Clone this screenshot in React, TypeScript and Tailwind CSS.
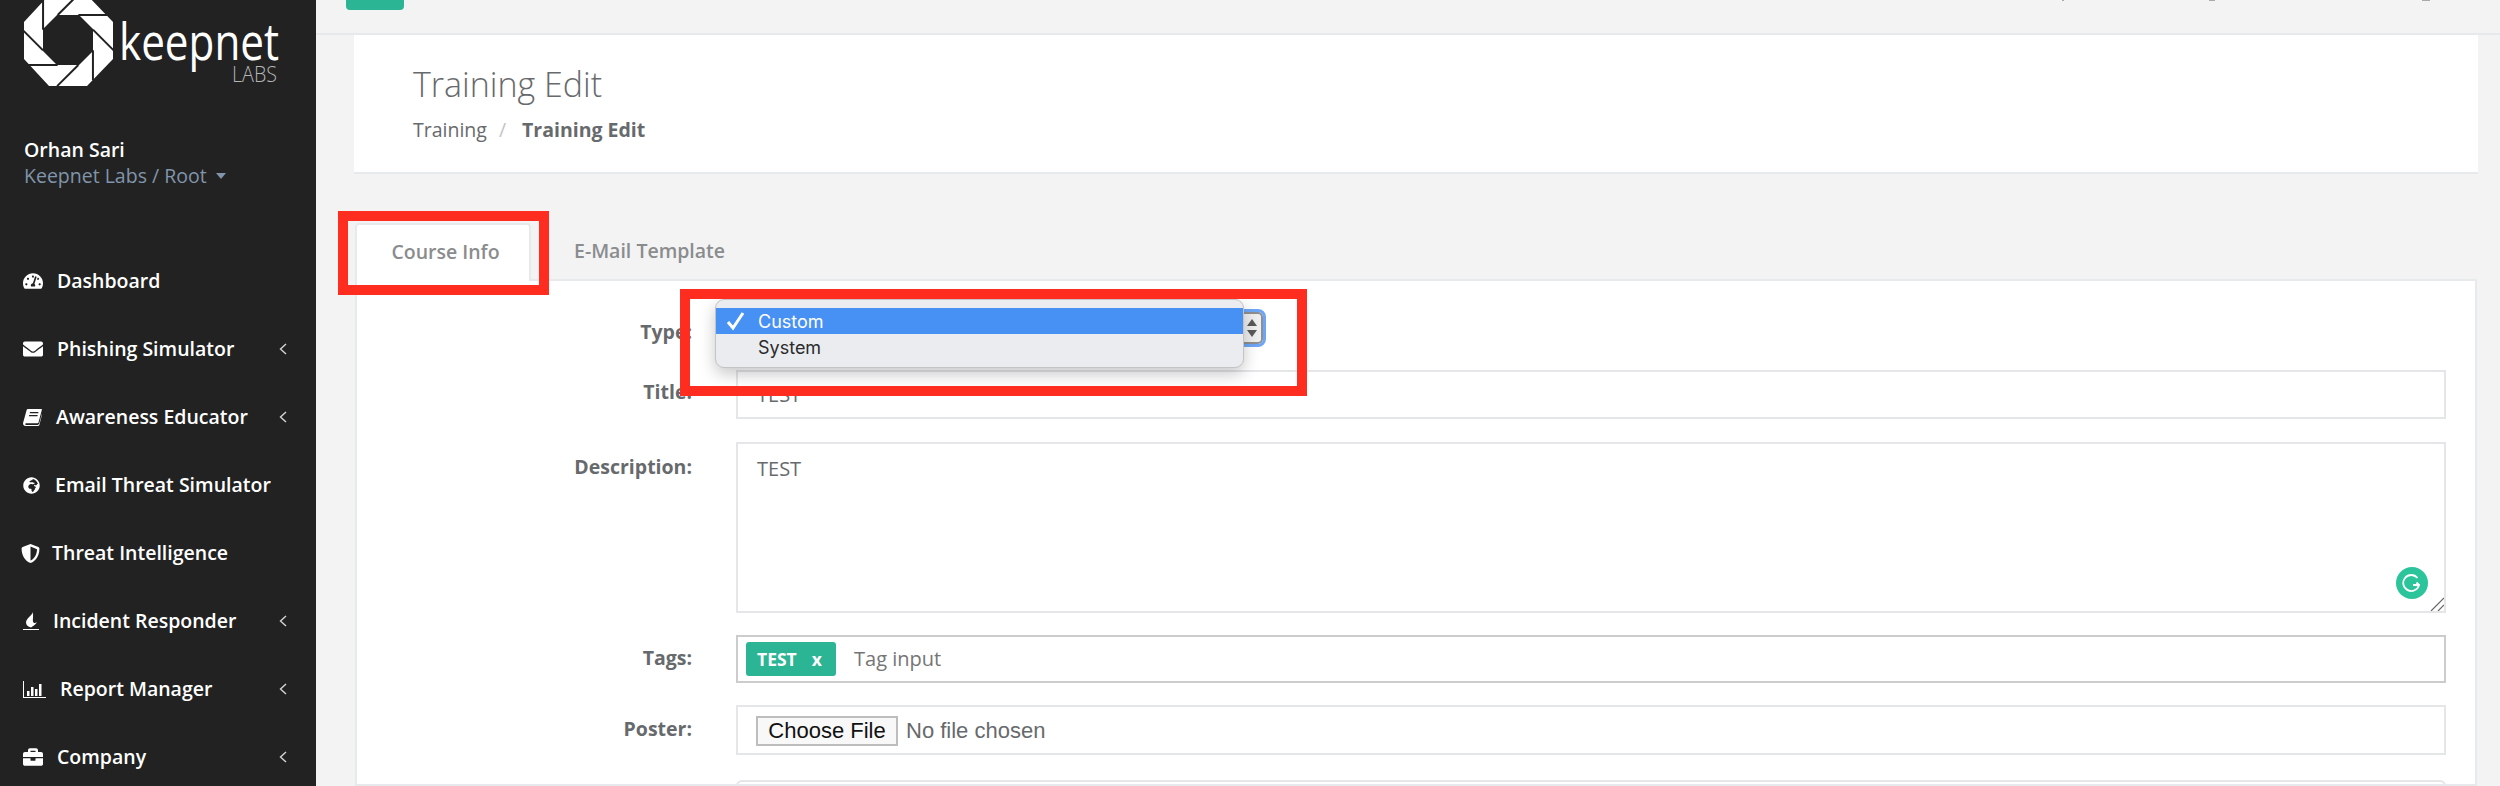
import { FaBriefcase, FaEnvelope, FaGlobeAfrica, FaShieldAlt, FaTachometerAlt } from 'react-icons/fa';
import { ReactNode } from 'react';

// pinwheel cuts of the logo: each inner edge runs on until it leaves the ring
const logoCuts = [0, 1, 2, 3, 4, 5, 6, 7].map((i) => {
	const at = (n: number, r: number) => {
		const a = ((n * 45 + 22.5) * Math.PI) / 180;
		return [68 + r * Math.cos(a), 40 + r * Math.sin(a)];
	};
	const [x1, y1] = at(i, 27);
	const [x2, y2] = at(i + 1, 27);
	const len = Math.hypot(x2 - x1, y2 - y1);
	const ex = x2 + ((x2 - x1) / len) * 30;
	const ey = y2 + ((y2 - y1) / len) * 30;
	return `M${x2} ${y2} L${ex} ${ey}`;
});

const Logo = () => (
	<svg viewBox="0 0 290 90" className="w-[290px] h-[90px] block">
		<path
			d="M49 -5 L87 -5 L113 22 L113 59 L87 86 L49 86 L24 59 L24 22 Z M57 15 L43 29 L43 51 L57 65 L79 65 L93 51 L93 29 L79 15 Z"
			fill="white"
			fillRule="evenodd"
		/>
		<path d={logoCuts.join(' ')} stroke="#222222" strokeWidth="2" fill="none" />
		<text x="119" y="60" fill="white" fontSize="52" fontWeight="400" fontFamily="'Open Sans', sans-serif" textLength="160" lengthAdjust="spacingAndGlyphs">
			keepnet
		</text>
		<text x="232" y="82" fill="#b5b5b5" fontSize="22" fontWeight="300" fontFamily="'Open Sans', sans-serif" textLength="45" lengthAdjust="spacingAndGlyphs">
			LABS
		</text>
	</svg>
);

const BookIcon = () => (
	<svg viewBox="0 0 19 17" className="w-[19px] h-[17px]" fill="white">
		<path d="M5 0 H18.5 C19 0 19 .5 18.8 1 L15.5 13.5 C15.3 14 15 14.3 14.5 14.3 H3 C2 14.3 2 16 3 16 H14.5 C15.5 16 16 15 16.3 14.3 L18.8 5 L19 5.5 L16.5 15.5 C16.2 16.5 15.5 17 14.5 17 H2.5 C.8 17 -.4 15.5 .2 13.5 L3.5 1.5 C3.8 .5 4.2 0 5 0Z" />
		<path d="M7 3 H15.5 L15.2 4.2 H6.7Z M6.2 6 H14.7 L14.4 7.2 H5.9Z" fill="#222222" />
	</svg>
);

const FireIcon = () => (
	<svg viewBox="0 0 16 18" className="w-[16px] h-[18px]" fill="white">
		<path d="M9.5 0 C10 3 3 6 3 10.5 C3 13 5 15 8 15.5 C9 14.8 12 13.5 14 10 C13 11 11.5 11.5 10.5 10.5 C9 9 11 4 9.5 0Z" />
		<rect x="0" y="17" width="16" height="1" />
	</svg>
);

const ChartIcon = () => (
	<svg viewBox="0 0 23 17" className="w-[23px] h-[17px]" fill="white">
		<rect x="0" y="0" width="1" height="17" />
		<rect x="0" y="16" width="23" height="1" />
		<rect x="4" y="10" width="2.5" height="5" />
		<rect x="8" y="6" width="2.5" height="9" />
		<rect x="12" y="8" width="2.5" height="7" />
		<rect x="16" y="3" width="2.5" height="12" />
	</svg>
);

const menu: { icon: ReactNode; label: string; slot: string; arrow?: boolean }[] = [
	{ icon: <FaTachometerAlt className="w-[20px] h-[20px]" />, label: 'Dashboard', slot: 'w-[34px]' },
	{ icon: <FaEnvelope className="w-[20px] h-[20px]" />, label: 'Phishing Simulator', slot: 'w-[34px]', arrow: true },
	{ icon: <BookIcon />, label: 'Awareness Educator', slot: 'w-[33px]', arrow: true },
	{ icon: <FaGlobeAfrica className="w-[17px] h-[17px]" />, label: 'Email Threat Simulator', slot: 'w-[32px]' },
	{ icon: <FaShieldAlt className="w-[19px] h-[19px] -ml-[2px]" />, label: 'Threat Intelligence', slot: 'w-[29px]' },
	{ icon: <FireIcon />, label: 'Incident Responder', slot: 'w-[30px]', arrow: true },
	{ icon: <ChartIcon />, label: 'Report Manager', slot: 'w-[37px]', arrow: true },
	{ icon: <FaBriefcase className="w-[20px] h-[20px]" />, label: 'Company', slot: 'w-[34px]', arrow: true },
];

const Sidebar = () => (
	<aside className="w-[316px] h-full shrink-0 bg-[#222222] overflow-hidden">
		<Logo />
		<div className="pl-[24px] mt-[47px]">
			<div className="text-[19.5px] leading-[26px] font-semibold text-white">Orhan Sari</div>
			<div className="text-[19.5px] leading-[26px] text-[#8095ab] flex items-center">
				Keepnet Labs / Root
				<span className="ml-[9px] w-0 h-0 border-x-[5px] border-x-transparent border-t-[6px] border-t-[#8095ab]" />
			</div>
		</div>
		<nav className="mt-[58px]">
			{menu.map((m) => (
				<div key={m.label} className="h-[68px] pl-[23px] pr-[29px] flex items-center text-white text-[19.5px] font-semibold">
					<span className={`${m.slot} shrink-0 flex items-center`}>{m.icon}</span>
					<span>{m.label}</span>
					{m.arrow && (
						<svg viewBox="0 0 8 12" className="w-[8px] h-[12px] ml-auto" fill="none" stroke="#d5d5d5" strokeWidth="1.4">
							<path d="M7 1 L1.5 6 L7 11" />
						</svg>
					)}
				</div>
			))}
		</nav>
	</aside>
);

const Row = ({ label, className, pad, children }: { label: string; className: string; pad: string; children: ReactNode }) => (
	<div className={`flex ${className}`}>
		<label className={`w-[379px] shrink-0 pr-[44px] text-right text-[19.5px] leading-[26px] font-bold text-[#676a6c] ${pad}`}>{label}</label>
		<div className="w-[1710px] h-full relative">{children}</div>
	</div>
);

const inputBox = 'w-full h-full border-2 border-[#e5e6e7] text-[20px] text-[#676a6c] px-[19px]';

const Form = () => (
	<div className="flex-1 border-2 border-[#e7eaec] bg-white pt-[23px] min-h-0 overflow-hidden">
		<Row label="Type:" className="h-[45px]" pad="pt-[15px]">
			<div className="w-[527px] h-[32px] mt-[8px] bg-[#efefef] rounded-[5px] border-2 border-[#8f8f8f] outline-[3px] outline-[#6ea6f5] flex items-center justify-end pr-[3px]">
				<svg viewBox="0 0 12 20" className="w-[12px] h-[20px]" fill="#5a5a5a">
					<path d="M6 1 L11 8 L1 8 Z M6 19 L11 12 L1 12 Z" />
				</svg>
			</div>
		</Row>
		<Row label="Title:" className="h-[49px] mt-[21px]" pad="pt-[9px]">
			<div className={`${inputBox} flex items-center`}>TEST</div>
		</Row>
		<Row label="Description:" className="h-[171px] mt-[23px]" pad="pt-[12px]">
			<div className={`${inputBox} pt-[10px]`}>TEST</div>
			<div className="absolute right-[18px] bottom-[14px] w-[32px] h-[32px] rounded-full bg-[#2bc49b] flex items-center justify-center">
				<svg viewBox="0 0 20 20" className="w-[20px] h-[20px]" fill="none" stroke="white" strokeWidth="1.8">
					<path d="M15.5 5 A8 8 0 1 0 17 12 H11 M17 12 L14.5 9.5" />
				</svg>
			</div>
			<svg viewBox="0 0 14 14" className="absolute right-[2px] bottom-[2px] w-[14px] h-[14px]" stroke="#666" strokeWidth="1.2">
				<path d="M1 14 L14 1 M8 14 L14 8" />
			</svg>
		</Row>
		<Row label="Tags:" className="h-[48px] mt-[22px]" pad="pt-[10px]">
			<div className="w-full h-full border-2 border-[#cccccc] flex items-center pl-[8px] text-[20px]">
				<span className="h-[34px] w-[90px] bg-[#2bb594] rounded-[3px] text-white font-bold text-[17.5px] pl-[11px] flex items-center">
					TEST<span className="ml-[15px]">x</span>
				</span>
				<span className="ml-[18px] text-[#757575]">Tag input</span>
			</div>
		</Row>
		<Row label="Poster:" className="h-[50px] mt-[22px]" pad="pt-[11px]">
			<div className="w-full h-full border-2 border-[#e5e6e7] flex items-center pl-[18px] pt-[1px] text-[22px] text-[#676a6c] font-['Liberation_Sans',sans-serif]">
				<span className="h-[30px] w-[142px] border-2 border-[#bdbdbd] bg-[#f8f8f8] flex items-center justify-center text-[#111]">
					Choose File
				</span>
				<span className="ml-[8px]">No file chosen</span>
			</div>
		</Row>
		<div className="ml-[379px] w-[1710px] mt-[25px] h-[40px] border-2 border-[#e5e6e7] rounded-[6px]" />
	</div>
);

export default function App() {
	return (
		<div className="relative flex w-[2500px] h-[786px] overflow-hidden bg-[#f3f3f4] text-[#676a6c] font-['Open_Sans',sans-serif]">
			<Sidebar />
			<main className="flex-1 min-w-0 flex flex-col">
				<div className="h-[35px] shrink-0 border-b-2 border-[#e7eaec] pl-[30px] flex justify-between">
					<div className="w-[58px] h-[10px] bg-[#2bb594] rounded-b-[4px]" />
					<div className="flex items-start pr-[70px]">
						<span className="w-[2px] h-[1px] bg-[#aaaaaa]" />
						<span className="w-[6px] h-[1px] bg-[#aaaaaa] ml-[145px]" />
						<span className="w-[8px] h-[1px] bg-[#aaaaaa] ml-[207px]" />
					</div>
				</div>
				<div className="ml-[38px] mr-[22px] h-[139px] shrink-0 bg-white border-b-2 border-[#e7eaec] pl-[59px] pt-[27px]">
					<h2 className="text-[34px] leading-[44px] font-light text-[#676a6c]">Training Edit</h2>
					<div className="mt-[11px] text-[19.5px] leading-[26px] flex">
						<span>Training</span>
						<span className="ml-[12px] text-[#c4c4c4]">/</span>
						<strong className="ml-[16px] font-bold">Training Edit</strong>
					</div>
				</div>
				<div className="ml-[39px] mr-[23px] mt-[49px] flex-1 min-h-0 flex flex-col">
					<div className="flex h-[58px] shrink-0 -mb-[2px] z-10">
						<div className="w-[176px] bg-white border-2 border-b-0 border-[#e7eaec] rounded-t-[4px] flex items-center justify-center text-[19.5px] font-semibold text-[#8a8c8e] pb-[2px] pl-[5px]">
							Course Info
						</div>
						<div className="ml-[14px] px-[29px] flex items-center text-[19.5px] font-semibold text-[#8a8c8e] pb-[2px]">
							E-Mail Template
						</div>
					</div>
					<Form />
				</div>
			</main>
			<div className="absolute left-[338px] top-[211px] w-[211px] h-[84px] border-[10px] border-[#ff2d20]" />
			<div className="absolute left-[715px] top-[299px] w-[529px] h-[69px] bg-[#eaecf0] rounded-[9px] border border-[#c4c4c4] shadow-[0_6px_16px_rgba(0,0,0,0.22)] pt-[8px] text-[18px] font-['Inter',sans-serif] text-[#2b2b2b]">
				<div className="h-[26px] bg-[#4791f5] text-white flex items-center pl-[42px] relative">
					<svg viewBox="0 0 20 20" className="absolute left-[10px] top-[3px] w-[20px] h-[20px]" fill="none" stroke="white" strokeWidth="3">
						<path d="M2 11 L7 17 L17 2" />
					</svg>
					Custom
				</div>
				<div className="h-[26px] flex items-center pl-[42px]">System</div>
			</div>
			<div className="absolute left-[680px] top-[289px] w-[627px] h-[107px] border-[10px] border-[#ff2d20]" />
		</div>
	);
}
